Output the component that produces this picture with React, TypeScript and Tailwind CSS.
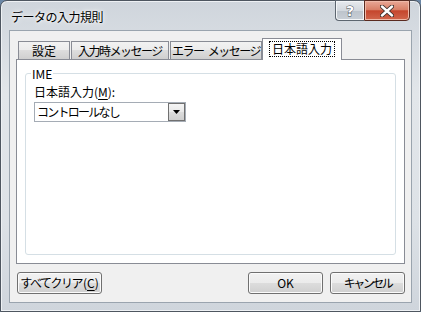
import * as React from 'react';

const font = "font-['Noto_Sans_CJK_JP',sans-serif]";

const btn =
  'flex items-center justify-center h-[22px] rounded-[3px] border border-[#707070] bg-[linear-gradient(180deg,#f2f2f2_0%,#ebebeb_50%,#dddddd_50%,#cfcfcf_100%)] shadow-[inset_0_0_0_1px_#fbfbfb] text-[12px] leading-none text-black whitespace-nowrap';

const tab =
  'flex items-center justify-center h-[18px] border border-b-0 border-[#898c95] bg-[linear-gradient(180deg,#f2f2f2_0%,#ebebeb_50%,#dddddd_50%,#cfcfcf_100%)] text-[12px] leading-none text-black whitespace-nowrap';

function CaptionButtons() {
  return (
    <div className="flex mr-[10px] -mt-px">
      {/* help */}
      <div className="w-[29px] h-[21px] flex items-center justify-center border border-[#5d6670] border-r-0 rounded-bl-[4px] bg-[linear-gradient(180deg,#e7eaee_0%,#d3d8de_50%,#bcc3cb_51%,#c9cfd6_100%)] shadow-[inset_0_0_0_1px_#f4f6f8]">
        <span className="font-['DejaVu_Sans',sans-serif] font-bold text-[14px] leading-none text-white [-webkit-text-stroke:0.8px_#3a4048] [paint-order:stroke_fill]">
          ?
        </span>
      </div>
      {/* close */}
      <div className="w-[46px] h-[21px] flex items-center justify-center border border-[#5a2a20] rounded-br-[4px] bg-[linear-gradient(180deg,#e9a897_0%,#d98068_45%,#c5462d_52%,#d1664c_100%)] shadow-[inset_0_0_0_1px_#efb9a8]">
        <svg width="14" height="12" viewBox="0 0 14 12">
          <path d="M2 1.5 L12 10.5 M12 1.5 L2 10.5" stroke="#3a2e2b" strokeWidth="4.2" strokeLinecap="round" />
          <path d="M2 1.5 L12 10.5 M12 1.5 L2 10.5" stroke="#ffffff" strokeWidth="2.4" strokeLinecap="round" />
        </svg>
      </div>
    </div>
  );
}

export default function App() {
  return (
    <div className={`w-[421px] h-[312px] bg-[#6b87a6] ${font}`}>
      <div className="w-full h-full flex flex-col rounded-t-[7px] border border-[#4e5660] bg-[linear-gradient(180deg,#cfd5dc_0%,#e2e6ea_30%,#dde2e7_70%,#cfd5dc_100%)] shadow-[inset_0_0_0_1px_#eef1f4]">
        {/* Title bar */}
        <div className="h-[30px] flex items-start justify-between">
          <span className="pl-[10px] pt-[8px] text-[12px] leading-[15px] text-black tracking-[-0.5px] [text-shadow:0_0_6px_#ffffff,0_0_3px_#ffffff]">
            データの入力規則
          </span>
          <CaptionButtons />
        </div>

        {/* Client area */}
        <div className="flex-1 mx-[8px] mb-[8px] border border-[#9aa4ae] bg-[#f0f0f0] flex flex-col px-[6px] pt-[8px] pb-[8px]">
          {/* Tabs */}
          <div className="flex items-end h-[20px] pl-[2px]">
            <div className={`${tab} w-[52px]`}>設定</div>
            <div className={`${tab} w-[98px] ml-px tracking-[-1.5px]`}>入力時メッセージ</div>
            <div className={`${tab} w-[92px] ml-px tracking-[-1.5px]`}>
              エラー<span className="ml-[4px]">メッセージ</span>
            </div>
            <div className="relative z-10 -mb-px h-[22px] w-[80px] flex items-start justify-center pt-[2px] border border-b-0 border-[#898c95] bg-white text-[12px] leading-none text-black">
              <span className="px-[2px] h-[16px] flex items-center border border-dotted border-black">
                日本語入力
              </span>
            </div>
          </div>

          {/* Tab panel */}
          <div className="h-[205px] border border-[#898c95] bg-white px-[8px] pb-[8px] flex flex-col">
            <fieldset className="flex-1 border border-[#d5dfe5] rounded-[3px] px-[8px] mt-[6px]">
              <legend className="-ml-[3px] px-[1px] text-[12px] leading-[15px] text-black">IME</legend>
              <div className="mt-[3px] text-[12px] leading-[15px] text-black">
                日本語入力(<span className="underline underline-offset-2">M</span>):
              </div>
              <div className="mt-[3px] w-[152px] h-[20px] flex border border-[#a5acb5] bg-white">
                <div className="flex-1 flex items-center pl-[2px] text-[12px] leading-none text-black tracking-[-1.75px] whitespace-nowrap">
                  コントロールなし
                </div>
                <div className="w-[17px] flex items-center justify-center border border-[#707070] bg-[linear-gradient(180deg,#f4f4f4_0%,#e8e8e8_50%,#dcdcdc_51%,#cfcfcf_100%)]">
                  <svg width="7" height="4" viewBox="0 0 7 4">
                    <path d="M0 0 H7 L3.5 4 Z" fill="#000" />
                  </svg>
                </div>
              </div>
            </fieldset>
          </div>

          {/* Buttons */}
          <div className="mt-[8px] flex items-center">
            <div className={`${btn} w-[85px] ml-px`}>
              <span className="tracking-[-1.5px]">すべてクリア</span>
              <span className="ml-[1px]">
                (<span className="underline underline-offset-2">C</span>)
              </span>
            </div>
            <div className="flex-1" />
            <div className={`${btn} w-[75px] border-[#3c7fb1] shadow-[inset_0_0_0_1px_#6fd0f6]`}>OK</div>
            <div className={`${btn} w-[75px] ml-[7px] tracking-[-2.5px]`}>キャンセル</div>
          </div>
        </div>
      </div>
    </div>
  );
}
